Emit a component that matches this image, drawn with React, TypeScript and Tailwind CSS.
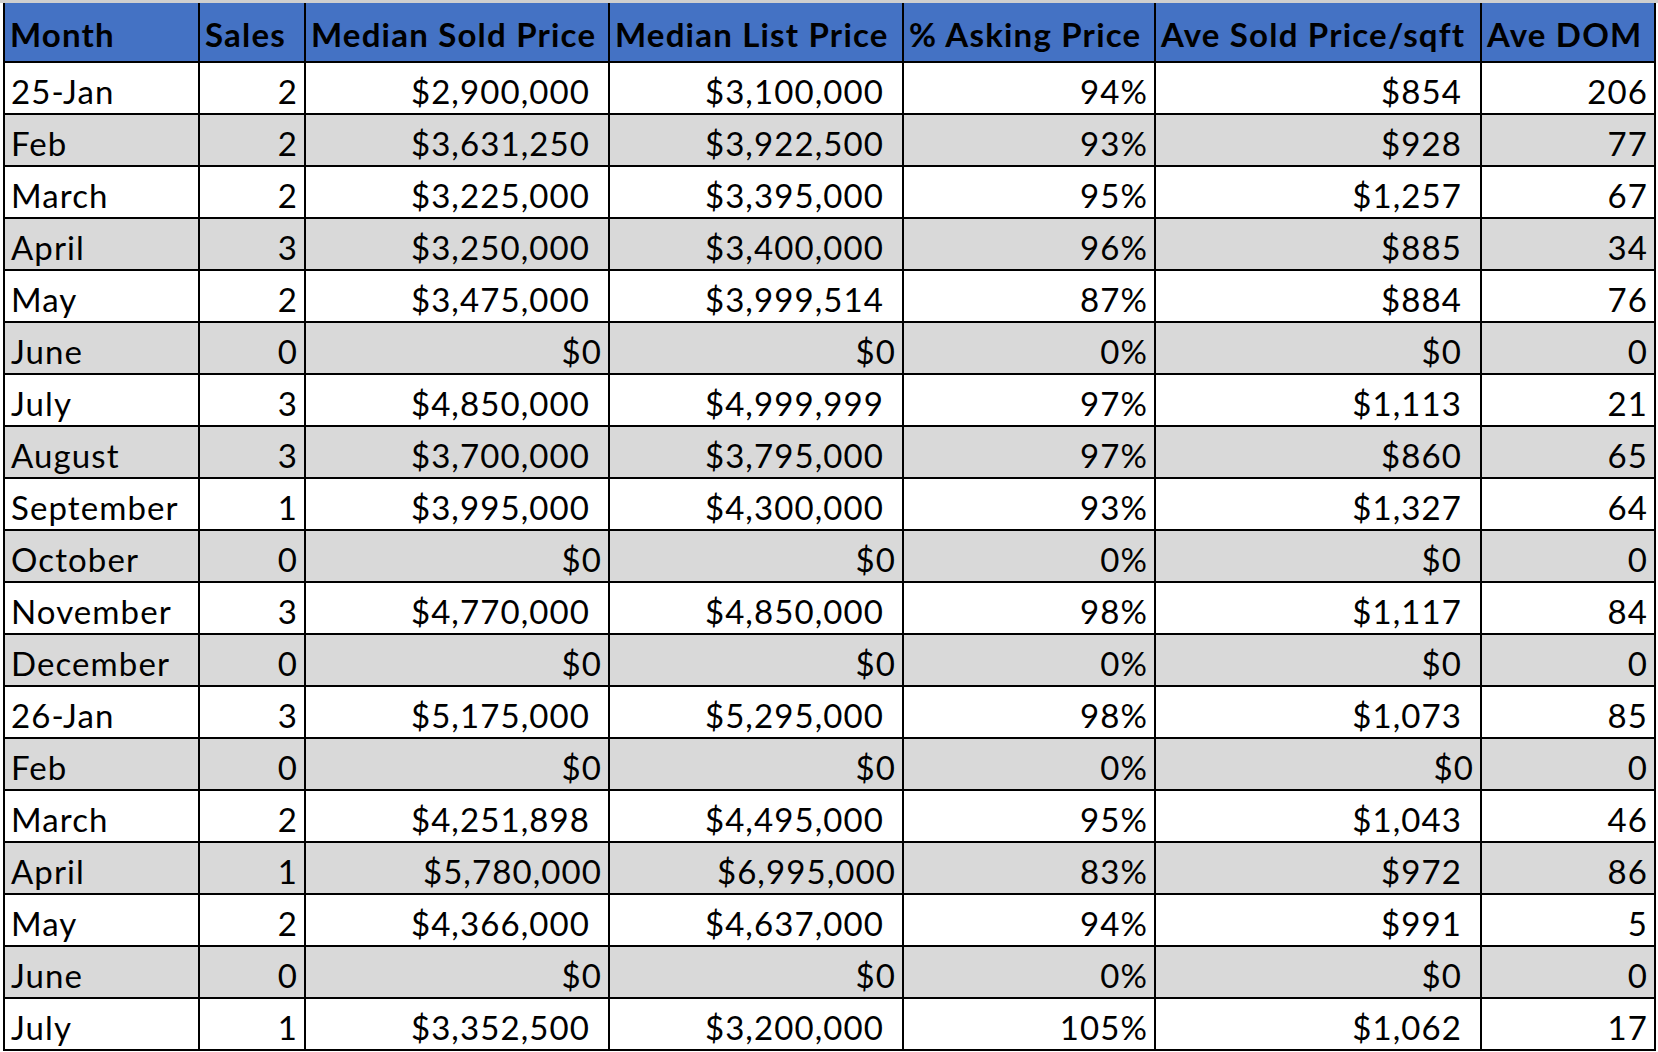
const headers = [
  'Month',
  'Sales',
  'Median Sold Price',
  'Median List Price',
  '% Asking Price',
  'Ave Sold Price/sqft',
  'Ave DOM',
];

// widths measured border-centre to border-centre
const colWidths = ['w-[195px]', 'w-[106px]', 'w-[304px]', 'w-[294px]', 'w-[252px]', 'w-[326px]', 'w-[174px]'];

type Row = {
  month: string;
  sales: number;
  sold: string;
  list: string;
  asking: string;
  sqft: string;
  dom: number;
  tight?: boolean; // price cells without the accounting trailing space
  tightSqft?: boolean;
};

const rows: Row[] = [
  { month: '25-Jan', sales: 2, sold: '$2,900,000', list: '$3,100,000', asking: '94%', sqft: '$854', dom: 206 },
  { month: 'Feb', sales: 2, sold: '$3,631,250', list: '$3,922,500', asking: '93%', sqft: '$928', dom: 77 },
  { month: 'March', sales: 2, sold: '$3,225,000', list: '$3,395,000', asking: '95%', sqft: '$1,257', dom: 67 },
  { month: 'April', sales: 3, sold: '$3,250,000', list: '$3,400,000', asking: '96%', sqft: '$885', dom: 34 },
  { month: 'May', sales: 2, sold: '$3,475,000', list: '$3,999,514', asking: '87%', sqft: '$884', dom: 76 },
  { month: 'June', sales: 0, sold: '$0', list: '$0', asking: '0%', sqft: '$0', dom: 0 },
  { month: 'July', sales: 3, sold: '$4,850,000', list: '$4,999,999', asking: '97%', sqft: '$1,113', dom: 21 },
  { month: 'August', sales: 3, sold: '$3,700,000', list: '$3,795,000', asking: '97%', sqft: '$860', dom: 65 },
  { month: 'September', sales: 1, sold: '$3,995,000', list: '$4,300,000', asking: '93%', sqft: '$1,327', dom: 64 },
  { month: 'October', sales: 0, sold: '$0', list: '$0', asking: '0%', sqft: '$0', dom: 0 },
  { month: 'November', sales: 3, sold: '$4,770,000', list: '$4,850,000', asking: '98%', sqft: '$1,117', dom: 84 },
  { month: 'December', sales: 0, sold: '$0', list: '$0', asking: '0%', sqft: '$0', dom: 0 },
  { month: '26-Jan', sales: 3, sold: '$5,175,000', list: '$5,295,000', asking: '98%', sqft: '$1,073', dom: 85 },
  { month: 'Feb', sales: 0, sold: '$0', list: '$0', asking: '0%', sqft: '$0', dom: 0, tightSqft: true },
  { month: 'March', sales: 2, sold: '$4,251,898', list: '$4,495,000', asking: '95%', sqft: '$1,043', dom: 46 },
  { month: 'April', sales: 1, sold: '$5,780,000', list: '$6,995,000', asking: '83%', sqft: '$972', dom: 86, tight: true },
  { month: 'May', sales: 2, sold: '$4,366,000', list: '$4,637,000', asking: '94%', sqft: '$991', dom: 5 },
  { month: 'June', sales: 0, sold: '$0', list: '$0', asking: '0%', sqft: '$0', dom: 0 },
  { month: 'July', sales: 1, sold: '$3,352,500', list: '$3,200,000', asking: '105%', sqft: '$1,062', dom: 17 },
];

const cell = 'h-[52px] border-2 border-black align-bottom pb-[5px] leading-none tracking-[1.1px]';
const num = `${cell} text-right pr-[6px]`;
const money = `${cell} text-right pr-[18px]`;

export default function App() {
  return (
    <div className="h-[1052px] overflow-hidden bg-white font-['Lato',sans-serif] text-[33px] text-black">
      <div className="h-[3px] bg-[#cfcfcf]" />
      <table className="ml-[3px] table-fixed border-collapse border-x-2 border-b-2 border-black">
        <colgroup>
          {colWidths.map((w, i) => (
            <col key={i} className={w} />
          ))}
        </colgroup>
        <thead>
          <tr className="bg-[#4472c4]">
            {headers.map(h => (
              <th
                key={h}
                className="h-[59px] whitespace-nowrap border-x-2 border-b-2 border-black pl-[5px] pb-[10px] text-left align-bottom font-bold leading-none tracking-[1.2px]"
              >
                {h}
              </th>
            ))}
          </tr>
        </thead>
        <tbody>
          {rows.map((r, i) => {
            const isZero = r.sales === 0;
            const priceCls = r.tight || isZero ? num : money;
            return (
              <tr key={i} className={i % 2 === 1 ? 'bg-[#d9d9d9]' : 'bg-white'}>
                <td className={`${cell} pl-[6px] text-left`}>{r.month}</td>
                <td className={num}>{r.sales}</td>
                <td className={priceCls}>{r.sold}</td>
                <td className={priceCls}>{r.list}</td>
                <td className={num}>{r.asking}</td>
                <td className={r.tightSqft ? num : money}>{r.sqft}</td>
                <td className={num}>{r.dom}</td>
              </tr>
            );
          })}
        </tbody>
      </table>
    </div>
  );
}
